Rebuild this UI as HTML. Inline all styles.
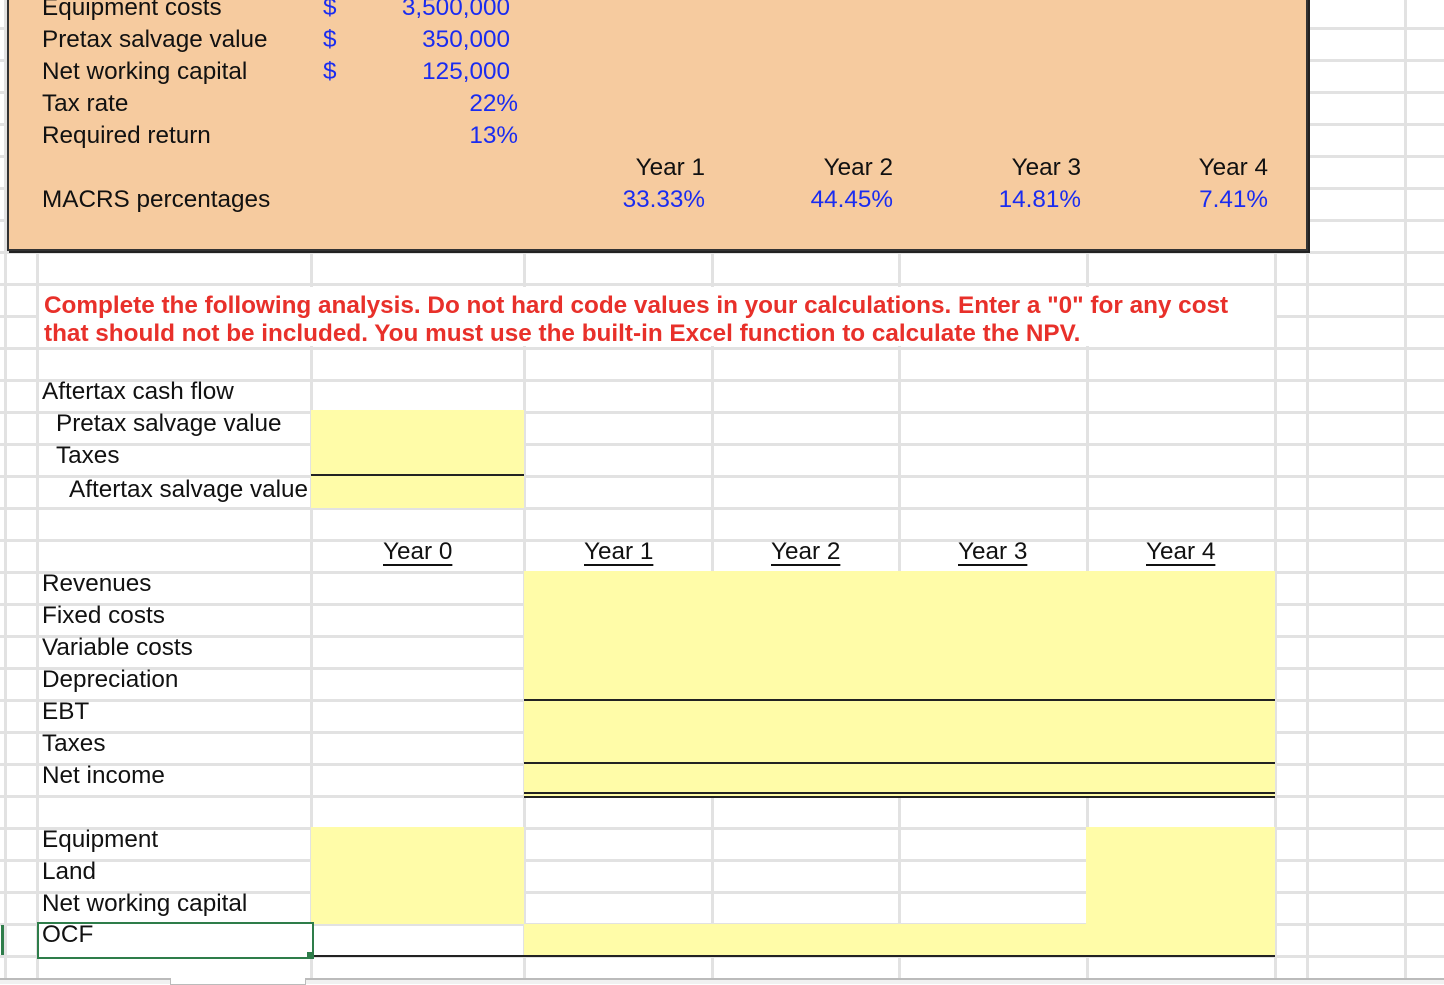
<!DOCTYPE html>
<html><head><meta charset="utf-8"><style>
body{margin:0;width:1444px;height:982px;overflow:hidden;position:relative;background:#fff;font-family:"Liberation Sans",Arial,sans-serif;}
.grid{position:absolute;left:0;top:0;width:1444px;height:978px;background:repeating-linear-gradient(to bottom,transparent 0,transparent 27px,#e2e2e2 27px,#e2e2e2 30px,transparent 30px,transparent 32px);}
.v{position:absolute;top:0;height:978px;width:3px;background:#e2e2e2;}
.a{position:absolute;}
.t{position:absolute;font-size:24.3px;line-height:26px;color:#111;white-space:nowrap;}
.b{color:#1a2cf0;}
.r{text-align:right;}
.y{position:absolute;background:#fffca8;}
.hl{position:absolute;height:2px;background:#222;}
.u{text-decoration:underline;text-underline-offset:5px;text-decoration-thickness:2px;}
</style></head><body>
<div class="grid"></div>
<div class="v" style="left:4px"></div>
<div class="v" style="left:36px"></div>
<div class="v" style="left:310px"></div>
<div class="v" style="left:523px"></div>
<div class="v" style="left:711px"></div>
<div class="v" style="left:898px"></div>
<div class="v" style="left:1086px"></div>
<div class="v" style="left:1274px"></div>
<div class="v" style="left:1306px"></div>
<div class="v" style="left:1404px"></div>
<div class="a" style="left:39px;top:287px;width:1235px;height:59px;background:#fff"></div>
<div class="a" style="left:7px;top:-4px;width:1297px;height:253px;background:#f6cb9f;border:2px solid #333;border-top:none;box-shadow:2px 2px 0 #222;"></div>
<div class="y" style="left:311px;top:410px;width:213px;height:98px"></div>
<div class="hl" style="left:311px;top:474px;width:213px"></div>
<div class="y" style="left:524px;top:571px;width:751px;height:226px"></div>
<div class="hl" style="left:524px;top:699px;width:751px"></div>
<div class="hl" style="left:524px;top:762px;width:751px"></div>
<div class="hl" style="left:524px;top:792px;width:751px"></div>
<div class="hl" style="left:524px;top:796px;width:751px"></div>
<div class="y" style="left:311px;top:827px;width:213px;height:97px"></div>
<div class="y" style="left:1086px;top:827px;width:189px;height:97px"></div>
<div class="y" style="left:524px;top:924px;width:751px;height:32px"></div>
<div class="hl" style="left:311px;top:955px;width:964px"></div>
<div class="t" style="left:42px;top:-5px">Equipment costs</div>
<div class="t" style="left:42px;top:27px">Pretax salvage value</div>
<div class="t" style="left:42px;top:59px">Net working capital</div>
<div class="t" style="left:42px;top:91px">Tax rate</div>
<div class="t" style="left:42px;top:123px">Required return</div>
<div class="t" style="left:42px;top:187px">MACRS percentages</div>
<div class="t b" style="left:323px;top:-5px">$</div>
<div class="t b" style="left:323px;top:27px">$</div>
<div class="t b" style="left:323px;top:59px">$</div>
<div class="t b r" style="left:310px;width:200px;top:-5px">3,500,000</div>
<div class="t b r" style="left:310px;width:200px;top:27px">350,000</div>
<div class="t b r" style="left:310px;width:200px;top:59px">125,000</div>
<div class="t b r" style="left:310px;width:208px;top:91px">22%</div>
<div class="t b r" style="left:310px;width:208px;top:123px">13%</div>
<div class="t r" style="left:505px;width:200px;top:155px">Year 1</div>
<div class="t r" style="left:693px;width:200px;top:155px">Year 2</div>
<div class="t r" style="left:881px;width:200px;top:155px">Year 3</div>
<div class="t r" style="left:1068px;width:200px;top:155px">Year 4</div>
<div class="t b r" style="left:505px;width:200px;top:187px">33.33%</div>
<div class="t b r" style="left:693px;width:200px;top:187px">44.45%</div>
<div class="t b r" style="left:881px;width:200px;top:187px">14.81%</div>
<div class="t b r" style="left:1068px;width:200px;top:187px">7.41%</div>
<div class="t" style="left:44px;top:292px;color:#e8302a;font-weight:bold;line-height:28px">Complete the following analysis. Do not hard code values in your calculations. Enter a "0" for any cost<br>that should not be included. You must use the built-in Excel function to calculate the NPV.</div>
<div class="t" style="left:42px;top:379px">Aftertax cash flow</div>
<div class="t" style="left:56px;top:411px">Pretax salvage value</div>
<div class="t" style="left:56px;top:443px">Taxes</div>
<div class="t" style="left:69px;top:477px">Aftertax salvage value</div>
<div class="t u" style="left:383px;top:539px">Year 0</div>
<div class="t u" style="left:584px;top:539px">Year 1</div>
<div class="t u" style="left:771px;top:539px">Year 2</div>
<div class="t u" style="left:958px;top:539px">Year 3</div>
<div class="t u" style="left:1146px;top:539px">Year 4</div>
<div class="t" style="left:42px;top:571px">Revenues</div>
<div class="t" style="left:42px;top:603px">Fixed costs</div>
<div class="t" style="left:42px;top:635px">Variable costs</div>
<div class="t" style="left:42px;top:667px">Depreciation</div>
<div class="t" style="left:42px;top:699px">EBT</div>
<div class="t" style="left:42px;top:731px">Taxes</div>
<div class="t" style="left:42px;top:763px">Net income</div>
<div class="t" style="left:42px;top:827px">Equipment</div>
<div class="t" style="left:42px;top:859px">Land</div>
<div class="t" style="left:42px;top:891px">Net working capital</div>
<div class="a" style="left:37px;top:922px;width:273px;height:33px;border:2px solid #2e7d4a;background:#fff"></div>
<div class="t" style="left:42px;top:922px">OCF</div>
<div class="a" style="left:307px;top:952px;width:7px;height:7px;background:#2e7d4a"></div>
<div class="a" style="left:1px;top:925px;width:3px;height:30px;background:#2e7d4a"></div>
<div class="a" style="left:0;top:978px;width:1444px;height:4px;background:#f1f1f1;border-top:2px solid #bbb"></div>
<div class="a" style="left:170px;top:978px;width:134px;height:6px;background:#fff;border:1px solid #bbb;border-top:none"></div>
</body></html>
